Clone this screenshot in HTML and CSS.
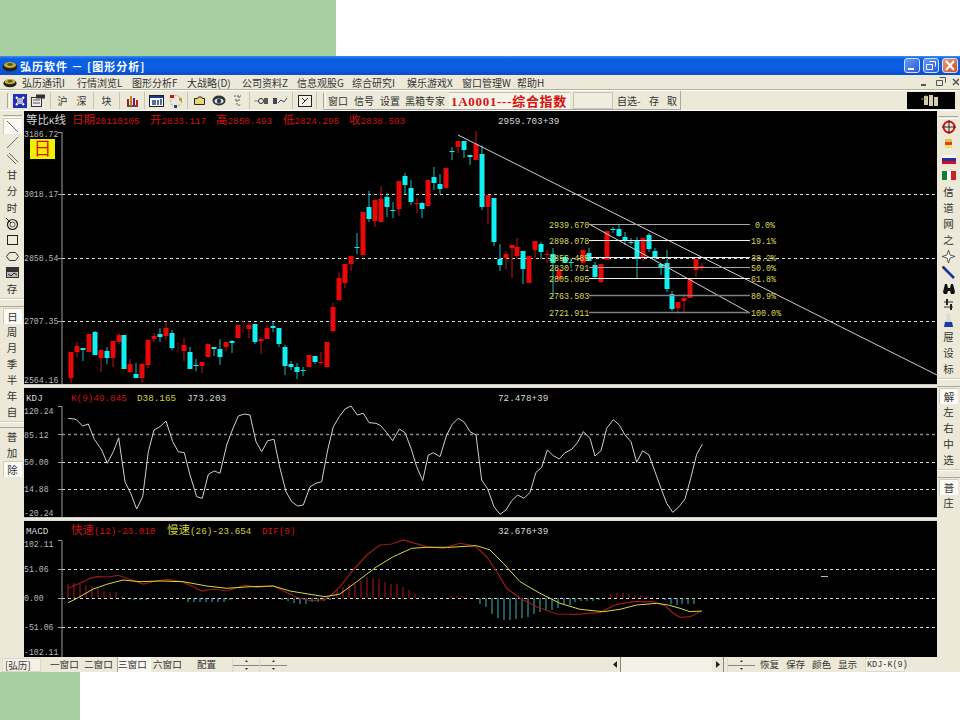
FILE: index.html
```html
<!DOCTYPE html>
<html lang="zh-CN">
<head>
<meta charset="utf-8">
<title>弘历软件</title>
<link rel="stylesheet" href="styles.css">
</head>
<body>
<div class="page">
  <div class="band-top"><div class="green-top"></div></div>
  <div class="app">
    <div class="titlebar">
      <svg class="ingot" width="16" height="12" viewBox="0 0 16 12"><ellipse cx="8" cy="7" rx="7.5" ry="4.5" fill="#222"/><ellipse cx="8" cy="5" rx="6" ry="3" fill="#c8b030"/><ellipse cx="8" cy="4.5" rx="3" ry="1.4" fill="#5a5a10"/></svg>
      <span class="title-text">弘历软件 － [图形分析]</span>
      <div class="win-btns">
        <span class="win-btn"><svg width="16" height="15" viewBox="0 0 16 15"><rect x="4" y="10" width="6" height="2" fill="#fff"/></svg></span>
        <span class="win-btn"><svg width="16" height="15" viewBox="0 0 16 15"><path d="M6.500 3.500h6v5M3.500 6.500h6v5h-6z" fill="none" stroke="#fff"/></svg></span>
        <span class="win-btn win-close"><svg width="16" height="15" viewBox="0 0 16 15"><path d="M4 3l8 9M12 3l-8 9" stroke="#fff" stroke-width="2"/></svg></span>
      </div>
    </div>
    <div class="menubar">
      <svg class="ingot-sm" width="14" height="11" viewBox="0 0 16 12"><ellipse cx="8" cy="7" rx="7.5" ry="4.5" fill="#222"/><ellipse cx="8" cy="5" rx="6" ry="3" fill="#c8b030"/><ellipse cx="8" cy="4.5" rx="3" ry="1.4" fill="#5a5a10"/></svg>
      <span class="menu-item">弘历通讯I</span>
      <span class="menu-item">行情浏览L</span>
      <span class="menu-item">图形分析F</span>
      <span class="menu-item">大战略(D)</span>
      <span class="menu-item">公司资料Z</span>
      <span class="menu-item">信息观股G</span>
      <span class="menu-item">综合研究I</span>
      <span class="menu-item">娱乐游戏X</span>
      <span class="menu-item">窗口管理W</span>
      <span class="menu-item">帮助H</span>
      <div class="mdi-btns">
        <svg width="40" height="12" viewBox="0 0 40 12"><rect x="2" y="8" width="5" height="2" fill="#555"/><path d="M20.500 1.500h6v5M17.500 4.500h6v5h-6z" fill="none" stroke="#555"/><path d="M34 3l6 6M40 3l-6 6" stroke="#555" stroke-width="1.500"/></svg>
      </div>
    </div>
    <div class="toolbar">
      <div class="tool-group tg-left">
        <span class="grip"></span>
        <span class="cell c19"><svg width="14" height="14" viewBox="0 0 14 14"><rect width="14" height="14" fill="#2030b0"/><path d="M3 3l8 8M11 3l-8 8" stroke="#fff" stroke-width="2"/><rect x="4" y="4" width="6" height="6" fill="#b0b0c8"/></svg></span>
        <span class="cell c19"><svg width="15" height="13" viewBox="0 0 15 13"><rect x=".5" y="3.500" width="10" height="9" fill="#eee" stroke="#333"/><rect x="5" y=".5" width="9" height="4" fill="#333"/><path d="M2 6h7M2 9h7" stroke="#555"/></svg></span>
        <span class="sep"></span>
        <span class="cell c19">沪</span><span class="cell c19">深</span>
        <span class="sep"></span>
        <span class="cell c21">块</span>
        <span class="sep sep-w"></span>
        <span class="cell c19"><svg width="13" height="13" viewBox="0 0 13 13"><path d="M1 12h11" stroke="#222" stroke-width="1.500"/><rect x="1" y="5" width="2" height="7" fill="#a02020"/><rect x="4" y="2" width="2" height="10" fill="#c08020"/><rect x="7" y="4" width="2" height="8" fill="#801080"/><rect x="10" y="6" width="2" height="6" fill="#c02020"/></svg></span>
        <span class="sep"></span>
        <span class="cell c19"><svg width="15" height="12" viewBox="0 0 15 12"><rect x=".5" y=".5" width="14" height="11" fill="#fff" stroke="#123"/><rect x="1" y="1" width="13" height="2" fill="#1a3a90"/><rect x="3" y="5" width="4" height="5" fill="#5070a0"/><path d="M9 5v5M12 4v6" stroke="#1a3a90" stroke-width="1.500"/></svg></span>
        <span class="cell c19"><svg width="14" height="14" viewBox="0 0 14 14"><circle cx="7" cy="7" r="5.500" fill="none" stroke="#999" stroke-dasharray="2 2"/><rect x="1" y="1" width="4" height="3" fill="#d01010"/><rect x="10" y="4" width="3" height="3" fill="#c0a020"/><rect x="5" y="11" width="3" height="3" fill="#204090"/></svg></span>
        <span class="sep"></span>
        <span class="cell c19"><svg width="11" height="9" viewBox="0 0 11 9"><path d="M.5 2.500h3l1-1.500h3l1 1.500h2v6H.5z" fill="#e6d870" stroke="#222"/></svg></span>
        <span class="cell c19"><svg width="14" height="11" viewBox="0 0 14 11"><ellipse cx="7" cy="5.500" rx="6.500" ry="5" fill="#333"/><ellipse cx="7" cy="6" rx="4.500" ry="2.500" fill="#e4e4e4"/><circle cx="7" cy="6" r="2.200" fill="#1a3a70"/></svg></span>
        <span class="cell c19"><svg width="9" height="13" viewBox="0 0 9 13"><path d="M1 2h7M6 2v3M2 6h5M4 6v4c0 2 3 2 3 0" fill="none" stroke="#555" stroke-dasharray="2 1"/></svg></span>
        <span class="sep"></span>
        <span class="cell c19"><svg width="16" height="8" viewBox="0 0 16 8"><path d="M0 4h4" stroke="#888"/><circle cx="7" cy="4" r="2.500" fill="none" stroke="#333"/><rect x="10" y="1" width="4" height="6" fill="#555"/></svg></span>
        <span class="cell c19"><svg width="15" height="8" viewBox="0 0 15 8"><rect x="0" y="1" width="4" height="6" fill="#445"/><path d="M5 6l3-3 3 2 3-4" fill="none" stroke="#445"/></svg></span>
        <span class="sep"></span>
        <span class="cell c19"><svg width="14" height="12" viewBox="0 0 14 12"><rect x=".5" y=".5" width="13" height="11" fill="#f4f2e8" stroke="#222"/><path d="M4 3l3 3-3 3M10 3L7 6" fill="none" stroke="#222"/></svg></span>
        <span class="sep"></span>
      </div>
      <div class="tool-group tg-right">
        <span class="grip"></span>
        <span class="cell t26">窗口</span><span class="cell t26">信号</span><span class="cell t25">设置</span><span class="cell t44">黑箱专家</span>
        <span class="stock-title">1A0001---综合指数</span>
        <span class="stock-input"></span>
        <span class="cell t32">自选-</span><span class="cell t18">存</span><span class="cell t14">取</span>
      </div>
      <div class="logo"><svg width="20" height="15" viewBox="0 0 20 15"><path d="M3 3h4v9H3zM8 2h4v11H8zM13 4h4v9h-4z" fill="#d8cfb0"/><path d="M0 6h5M5 2v2" stroke="#8a8470"/></svg></div>
    </div>
    <div class="main">
      <aside class="side">
        <span class="side-grip"></span>
        <div class="tools tools-left">
          <span class="tool tool-on"><svg width="13" height="13" viewBox="0 0 13 13"><path d="M1 1l11 11" stroke="#666"/></svg></span>
          <span class="tool"><svg width="13" height="13" viewBox="0 0 13 13"><path d="M12 1L1 12" stroke="#666"/></svg></span>
          <span class="tool"><svg width="13" height="13" viewBox="0 0 13 13"><path d="M1 3l9 9M3 1l9 9" stroke="#666"/></svg></span>
          <span class="tool">甘</span><span class="tool">分</span><span class="tool">时</span>
          <span class="tool"><svg width="12" height="12" viewBox="0 0 12 12"><circle cx="6.500" cy="6.500" r="5" fill="none" stroke="#222" stroke-width="1.200"/><circle cx="6.500" cy="6.500" r="2.500" fill="none" stroke="#555"/><path d="M0 0l5 5" stroke="#222"/></svg></span>
          <span class="tool"><svg width="11" height="10" viewBox="0 0 11 10"><rect x=".5" y=".5" width="10" height="9" fill="none" stroke="#222"/></svg></span>
          <span class="tool"><svg width="13" height="9" viewBox="0 0 13 9"><path d="M3.500.5h6l3 4-3 4h-6l-3-4z" fill="none" stroke="#333"/></svg></span>
          <span class="tool"><svg width="13" height="11" viewBox="0 0 13 11"><rect width="13" height="11" fill="#333"/><rect x="1" y="5" width="11" height="5" fill="#bbb"/><path d="M2 7l3 2 3-3 3 2" fill="none" stroke="#222"/></svg></span>
          <span class="tool">存</span>
        </div>
        <span class="side-sep"></span>
        <span class="tool tool-on">日</span><span class="tool">周</span><span class="tool">月</span><span class="tool">季</span><span class="tool">半</span><span class="tool">年</span><span class="tool">自</span>
        <span class="side-sep sep-short"></span>
        <span class="tool">普</span><span class="tool">加</span><span class="tool tool-on">除</span>
      </aside>
      <div class="charts">
        <svg class="chart chart-top" viewBox="24 111 913 273" width="913" height="273">
          <g class="grid"><path d="M62 194.500H937M62 258.500H937M62 321.500H937"/></g>
          <path class="axis" d="M58 132.500h4V384M58 194.500h4M58 258.500h4M58 321.500h4"/>
          <path class="wick-red" d="M71 352V383M77 342V357M101 350V372M113 341V367M119 333V344M130 359V373M142 363V383M148 340V368M154 333V342M166 322V340M184 338V361M202 362V373M226 342V351M249 323V338M261 337V354M267 325V339M321 352V365M333 303V332M339 272V300M345 264V288M351 256V271M363 212V257M375 200V227M381 186V222M399 181V216M417 198V213M458 141V153M476 131V160M488 195V224M506 251V269M512 245V278M517 238V259M535 241V258M547 250V263M601 264V283M643 238V261M678 302V314M684 294V313M696 259V277M702 263V271"/>
          <path class="wick-dim" d="M178 342V353M243 321V333"/>
          <path class="wick-cyan" d="M83 348V361M95 331V355M107 347V364M136 363V378M160 328V342M172 330V350M190 347V369M196 359V371M214 347V356M220 339V365M232 340V353M255 324V344M273 322V332M279 328V347M285 345V375M291 361V370M297 363V379M303 367V376M315 356V364M357 233V254M369 191V222M387 193V217M393 202V218M405 173V194M411 180V205M422 202V218M434 167V190M440 174V194M452 147V160M464 141V158M470 155V165M482 145V210M494 198V246M500 244V271M523 251V284M541 242V259M553 248V297M565 255V263M571 258V268M589 248V261M595 262V279M613 227V233M619 224V237M625 232V245M631 238V245M637 237V279M649 233V252M655 248V260M661 264V275M667 250V292M672 291V311"/>
          <path class="body-red" d="M71 352V378M77 346V352M89 334V352M101 350V358M113 341V358M119 335V342M130 364V372M142 364V378M148 340V365M154 336V339M166 328V336M184 345V351M202 362V366M208 344V357M226 342V347M238 325V338M249 325V329M261 339V341M267 328V339M309 355V367M321 362V363M327 342V367M333 307V331M339 278V300M345 264V283M351 256V264M363 212V255M375 200V221M381 199V222M399 181V209M417 203V204M428 180V206M446 168V188M458 141V147M476 144V160M488 195V207M506 254V258M512 245V248M517 247V256M529 256V283M535 241V250M547 254V255M559 270V279M583 250V263M601 264V282M607 231V260M643 238V257M678 302V308M684 298V301M690 279V298M696 259V270M702 266V268"/>
          <path class="body-cyan" d="M83 348V350M95 332V355M107 351V358M124 335V369M136 374V378M160 334V337M172 333V348M190 352V369M196 365V366M214 347V349M220 349V357M232 341V343M255 324V342M273 326V328M279 328V344M285 347V366M291 364V367M297 367V372M303 370V371M315 356V362M357 247V248M369 207V219M387 197V207M393 210V211M405 176V185M411 188V202M422 203V209M434 177V183M440 184V189M452 151V152M464 141V150M470 155V157M482 154V207M494 198V242M500 259V265M523 251V269M541 244V252M553 254V263M565 257V263M571 262V263M589 253V261M595 265V277M613 229V230M619 229V236M625 237V241M631 242V243M637 240V259M649 235V249M655 251V258M661 264V267M667 263V289M672 294V309"/>
          <path class="trend" d="M458 135L937 375M589 224L750 313"/>
          <path class="fib-strong" d="M589 240.500H750M589 257.500H750M589 278.500H750"/>
          <path class="fib-weak" d="M589 224.500H750M589 267.500H750"/>
          <path class="fib-gray" d="M589 295.500H750M589 312.500H750"/>
          <g class="tx-fib">
            <text x="549" y="228">2939.670</text><text x="549" y="244">2898.078</text><text x="549" y="261">2856.485</text><text x="549" y="271">2830.791</text><text x="549" y="282">2805.095</text><text x="549" y="299">2763.503</text><text x="549" y="316">2721.911</text>
            <text x="755" y="228">0.0%</text><text x="751" y="244">19.1%</text><text x="751" y="261">38.2%</text><text x="751" y="271">50.0%</text><text x="751" y="282">61.8%</text><text x="751" y="299">80.9%</text><text x="751" y="316">100.0%</text>
          </g>
          <g class="tx-axis"><text x="24" y="137">3186.72</text><text x="24" y="197">3018.17</text><text x="24" y="261">2858.54</text><text x="24" y="324">2707.35</text><text x="24" y="383">2564.16</text></g>
          <text class="tx-white tx-head" x="26" y="124"><tspan class="cjk">等比</tspan>K<tspan class="cjk">线</tspan></text>
          <g class="tx-red tx-head"><text x="72" y="124"><tspan class="cjk">日期</tspan>20110105</text><text x="150" y="124"><tspan class="cjk">开</tspan>2833.117</text><text x="216" y="124"><tspan class="cjk">高</tspan>2850.493</text><text x="283" y="124"><tspan class="cjk">低</tspan>2824.296</text><text x="349" y="124"><tspan class="cjk">收</tspan>2838.593</text></g>
          <text class="tx-white tx-head" x="498" y="124">2959.703+39</text>
          <rect class="badge" x="30" y="139" width="25" height="20"/>
          <text class="badge-tx" x="42.500" y="155">日</text>
        </svg>
        <div class="split"></div>
        <svg class="chart chart-kdj" viewBox="24 388 913 129" width="913" height="129">
          <g class="grid"><path class="grid-dim" d="M62 434.500H937"/><path d="M62 462.500H937M62 489.500H937"/></g>
          <path class="axis" d="M58 406.500h4V517M58 434.500h4M58 462.500h4M58 489.500h4"/>
          <polyline class="kdj" points="68.300,418.300 76,419.300 82.700,426 88.300,424 94.300,439.300 101.700,450 107.300,463.300 113.300,451.700 118.700,437.700 125,481.700 130.700,493.300 136.700,509 142.700,496.700 148.300,451.700 154,430 160,426.700 166,421 172.700,441.700 178.300,451.700 184.300,452.700 190,475 196.700,496.700 202.300,498.300 208.300,474.300 214.300,471 220,473.300 226.700,445 232.300,430 238.300,416 244.300,414 250,415 256,441.700 261.700,451.700 267.700,440.700 274,439.300 280,468.300 286,491.700 291.700,501.700 297.700,506 303.300,505 310,486.700 316,483.300 321.700,481.700 327.700,450 333.300,426.700 339.300,416.700 345,409 351,406 357.300,415 363.300,413.300 369,422.700 376,423.300 380.700,425.700 386.700,432.700 392.700,440.700 399.300,429 405,432.700 411,448.300 416.700,466.700 422.700,480.700 428.300,455 433.300,452.700 440,456.700 446.700,435 452.300,424.300 458.300,418.300 464.300,422.300 470,431.700 476,435 481.700,480 487.700,489 494,506.700 500,514.300 506,510 511.700,500.700 517.700,495 524,498.300 530,492.300 536,472.300 541.700,467.300 547.300,450 553.300,455.700 559.300,459 565,452.700 571.700,449.300 577.700,442.300 583.300,431.700 590,438.300 595,456 601,450.700 606.700,428.300 613.300,419.700 619.300,425 625,435 631,441.700 636.700,462.300 642.700,450.700 649,455 655,471.700 661,488.300 666.700,503.300 672.700,512.300 679,506.700 685,499 690.700,478.300 696.700,454.300 702.300,444.300"/>
          <g class="tx-axis"><text x="24" y="414">120.24</text><text x="24" y="438">85.12</text><text x="24" y="465">50.00</text><text x="24" y="492">14.88</text><text x="24" y="516">-20.24</text></g>
          <text class="tx-white tx-head" x="26" y="401">KDJ</text>
          <text class="tx-red tx-head" x="71" y="401">K(9)49.845</text>
          <text class="tx-yellow tx-head" x="137" y="401">D38.165</text>
          <text class="tx-white tx-head" x="187" y="401">J73.203</text>
          <text class="tx-white tx-head" x="498" y="401">72.478+39</text>
        </svg>
        <div class="split"></div>
        <svg class="chart chart-macd" viewBox="24 521 913 136" width="913" height="136">
          <g class="grid"><path d="M62 569.500H937M62 598.500H937M62 627.500H937"/></g>
          <path class="axis" d="M58 540.500h4V657M58 569.500h4M58 598.500h4M58 627.500h4"/>
          <path class="hist-red" d="M68 598V584M74 598V583M80 598V584M86 598V585M92 598V587M98 598V588M104 598V591M110 598V592M116 598V592M122 598V596M242 598V597M248 598V597M254 598V597M337 598V590M343 598V587M349 598V584M355 598V584M361 598V581M367 598V578M373 598V578M379 598V579M385 598V582M391 598V584M397 598V584M403 598V587M409 598V590M415 598V594M421 598V597M427 598V597M451 598V596M457 598V596M463 598V596M611 598V594M617 598V593M623 598V593M629 598V594M635 598V595M641 598V595M647 598V596M653 598V597"/>
          <path class="hist-teal" d="M134 598V600M140 598V600M146 598V600M188 598V602M194 598V602M200 598V602M206 598V602M212 598V602M218 598V602M224 598V602M230 598V600M282 598V600M288 598V601M294 598V603M300 598V604M306 598V604M312 598V602M318 598V602M324 598V601M330 598V600M480 598V604M486 598V607M492 598V614M498 598V618M504 598V620M510 598V620M516 598V619M522 598V618M528 598V617M534 598V614M540 598V612M546 598V610M552 598V610M558 598V608M564 598V605M570 598V605M575 598V602M581 598V601M587 598V601M593 598V601M599 598V600M665 598V600M671 598V604M677 598V605M682 598V604M688 598V604M694 598V604"/>
          <polyline class="macd-red" points="68.300,588.300 80,583.300 90,578.300 96.700,576.700 108,577 118.300,575.300 126.700,578.300 143.300,584 155,581 166.700,579.300 181.700,581.700 193.300,586.700 201.700,591 213.300,589 226.700,591 245,585 256.700,587.300 273.300,586 285,591.700 296.700,597.300 311.700,601 325,599.300 333.300,593.300 340,586.700 353.300,570 366.700,555 380,545 391.700,544 403.300,540 415,543.300 426.700,546.700 443.300,548.300 460,543.300 475,545.700 486.700,556.700 496.700,571.700 506.700,588.300 520,598.300 536.700,606.700 556.700,614 576.700,614.300 600,612.300 616.700,604.300 633.300,601.700 653.300,601.700 665,605.700 673.300,613.300 680,617.300 690,616.700 701.700,611"/>
          <polyline class="macd-yellow" points="68.300,602.700 80,596.700 93.300,589 106.700,584.300 123.300,580 140,581.700 160,581 183.300,581.700 206.700,586 226.700,588.300 250,586.700 273.300,586 290,591 310,594.300 325,596.700 340,594 356.700,581.700 376.700,566.700 393.300,556.700 411.700,548.300 426.700,547.300 450,547.300 476.700,545.700 490,550 503.300,563.300 520,581.700 540,593.300 560,603.300 580,609.300 603.300,611.700 620,609.300 636.700,605 656.700,603.300 668.300,605 680,608.300 690,611.700 701.700,611"/>
          <path class="tick" d="M821 576.500h7"/>
          <g class="tx-axis"><text x="24" y="547">102.11</text><text x="24" y="572">51.06</text><text x="24" y="601">0.00</text><text x="24" y="630">-51.06</text><text x="24" y="655">-102.11</text></g>
          <text class="tx-white tx-head" x="26" y="534">MACD</text>
          <text class="tx-red tx-head" x="71" y="534"><tspan class="cjk">快速</tspan>(12)-23.010</text>
          <text class="tx-yellow tx-head" x="167" y="534"><tspan class="cjk">慢速</tspan>(26)-23.654</text>
          <text class="tx-red tx-head" x="262" y="534">DIF(9)</text>
          <text class="tx-white tx-head" x="498" y="534">32.676+39</text>
        </svg>
      </div>
      <aside class="side side-right">
        <span class="side-grip"></span>
        <div class="tools tools-right">
          <span class="tool"><svg width="14" height="14" viewBox="0 0 14 14"><circle cx="7" cy="7" r="5.500" fill="none" stroke="#d01010" stroke-width="2"/><path d="M7 0v14M0 7h14" stroke="#222"/></svg></span>
          <span class="tool"><svg width="7" height="9" viewBox="0 0 7 9"><rect width="7" height="3" fill="#e8c050"/><rect y="3" width="7" height="3" fill="#e04020"/><rect y="6" width="7" height="3" fill="#f0e070"/></svg></span>
          <span class="tool"><svg width="14" height="9" viewBox="0 0 14 9"><rect width="14" height="3" fill="#f4f4f4"/><rect y="3" width="14" height="3" fill="#2030a0"/><rect y="6" width="14" height="3" fill="#d01020"/></svg></span>
          <span class="tool"><svg width="14" height="9" viewBox="0 0 14 9"><rect width="5" height="9" fill="#108030"/><rect x="5" width="4" height="9" fill="#fff"/><rect x="9" width="5" height="9" fill="#d02020"/></svg></span>
          <span class="tool">信</span><span class="tool">道</span><span class="tool">网</span><span class="tool">之</span>
          <span class="tool"><svg width="13" height="13" viewBox="0 0 13 13"><path d="M6.500 0l1.500 5 5 1.500-5 1.500-1.500 5-1.500-5-5-1.500 5-1.500z" fill="#fff" stroke="#333" stroke-width=".8"/></svg></span>
          <span class="tool"><svg width="13" height="13" viewBox="0 0 13 13"><path d="M1 1l11 11" stroke="#1830a0" stroke-width="2.500"/><path d="M0 0l3 1-2 2z" fill="#222"/></svg></span>
          <span class="tool"><svg width="14" height="11" viewBox="0 0 14 11"><path d="M3 1h2l1 4h2l1-4h2l2 8-1 2h-3L8 8H6l-1 3H2L1 9z" fill="#111"/></svg></span>
          <span class="tool"><svg width="12" height="11" viewBox="0 0 12 11"><path d="M1 3h9M1 8h9" stroke="#333"/><path d="M4 0v6M8 5v6" stroke="#222" stroke-width="2"/></svg></span>
          <span class="tool"><svg width="9" height="13" viewBox="0 0 9 13"><path d="M3 0h3v4l3 6v3H0v-3l3-6z" fill="#d8d8d8"/><path d="M1 8h7l1 5H0z" fill="#1a3aa0"/></svg></span>
          <span class="tool">屉</span><span class="tool">设</span><span class="tool">标</span>
        </div>
        <span class="side-sep"></span>
        <span class="tool tool-on">解</span><span class="tool">左</span><span class="tool">右</span><span class="tool">中</span><span class="tool">选</span>
        <span class="side-sep"></span>
        <span class="tool tool-on">普</span><span class="tool">庄</span>
      </aside>
    </div>
    <div class="statusbar">
      <span class="st-box st-first">[弘历]</span>
      <span class="st-tab">一窗口</span><span class="st-tab">二窗口</span><span class="st-tab st-tab-on">三窗口</span><span class="st-tab">六窗口</span>
      <span class="st-conf">配置</span>
      <span class="spin"><svg width="27" height="14" viewBox="0 0 27 14"><path d="M0 7.500H27" stroke="#888"/><path d="M12 4h3l-1.500-2zM12 10h3l-1.500 2z" fill="#333"/></svg></span>
      <span class="spin"><svg width="27" height="14" viewBox="0 0 27 14"><path d="M0 7.500H27" stroke="#888"/><path d="M12 4h3l-1.500-2zM12 10h3l-1.500 2z" fill="#333"/></svg></span>
      <span class="st-gap"></span>
      <span class="scroll-btn"><svg width="6" height="7" viewBox="0 0 6 7"><path d="M5 0v7L1 3.500z" fill="#222"/></svg></span>
      <span class="scroll-track"></span>
      <span class="scroll-btn"><svg width="6" height="7" viewBox="0 0 6 7"><path d="M1 0v7l4-3.500z" fill="#222"/></svg></span>
      <span class="spin spin-r"><svg width="27" height="14" viewBox="0 0 27 14"><path d="M0 7.500H27" stroke="#888"/><path d="M12 4h3l-1.500-2zM12 10h3l-1.500 2z" fill="#333"/></svg></span>
      <span class="st-cmd st-cmd-first">恢复</span><span class="st-cmd">保存</span><span class="st-cmd">颜色</span><span class="st-cmd st-cmd-last">显示</span>
      <span class="st-box st-kdj">KDJ-K(9)</span>
    </div>
  </div>
  <div class="green-bottom"></div>
</div>
</body>
</html>
```

FILE: styles.css
```css
* { box-sizing: border-box; }
html, body { margin: 0; padding: 0; background: #fff; }
body { font-family: "Noto Sans CJK SC", "Liberation Sans", sans-serif; }
.page { width: 960px; height: 720px; display: flex; flex-direction: column; overflow: hidden; }
.band-top { height: 56px; flex: none; }
.green-top { width: 336px; height: 56px; background: #a5cf9f; }
.green-bottom { width: 80px; height: 48px; background: #a5cf9f; flex: none; }

.app { height: 616px; flex: none; display: flex; flex-direction: column; background: #ece9d8; }

.titlebar { height: 19px; flex: none; display: flex; align-items: center; padding: 0 2px 0 1px; color: #fff;
  background: linear-gradient(#3f8cf3 0, #0a5fe0 3px, #0b5fe2 12px, #0a4fd0 17px, #1050c8 19px); }
.ingot { margin: 0 2px 0 1px; }
.title-text { font-size: 11px; font-weight: 700; letter-spacing: 1px; line-height: 18px; }
.win-btns { margin-left: auto; display: flex; gap: 3px; }
.win-btn { width: 16px; height: 15px; border: 1px solid #d0e0fa; border-radius: 3px; background: linear-gradient(135deg, #6a9cf4, #2458d8); display: flex; align-items: center; justify-content: center; }
.win-btn svg { flex: none; }
.win-close { background: linear-gradient(135deg, #ee9a78, #d44a22); }

.menubar { height: 15px; flex: none; display: flex; align-items: center; padding-left: 3px; font-size: 10px; line-height: 15px; color: #333; border-bottom: 1px solid #b5b2a2; }
.ingot-sm { margin-right: 5px; }
.menu-item { width: 55px; flex: none; white-space: nowrap; }
.mdi-btns { margin-left: auto; margin-right: 1px; display: flex; }

.toolbar { height: 21px; flex: none; display: flex; align-items: stretch; border-top: 1px solid #fff; border-bottom: 1px solid #fff; font-size: 10px; color: #333; }
.tool-group { display: flex; align-items: center; height: 19px; }
.tg-left { width: 323px; padding-left: 7px; }
.tg-right { width: 358px; border-right: 1px solid #aca899; border-bottom: 1px solid #aca899; }
.grip { width: 3px; height: 15px; border-left: 1px solid #aca899; border-right: 1px solid #fff; flex: none; margin-right: 0; }
.tg-right .grip { margin-right: 2px; }
.cell { display: flex; align-items: center; justify-content: center; flex: none; height: 19px; white-space: nowrap; line-height: 19px; }
.c19 { width: 19px; }
.c21 { width: 21px; }
.t26, .t25, .t44, .t32, .t18, .t14 { justify-content: flex-start; }
.t26 { width: 26px; } .t25 { width: 25px; } .t44 { width: 44px; } .t32 { width: 32px; } .t18 { width: 18px; } .t14 { width: 14px; }
.sep { width: 5px; height: 17px; flex: none; background: linear-gradient(90deg, transparent 2px, #c8c5b4 2px, #c8c5b4 3px, transparent 3px); }
.sep-w { width: 6px; }
.stock-title { width: 121px; height: 17px; flex: none; color: #d81010; font-size: 13px; font-weight: 700; letter-spacing: .7px; line-height: 17px; padding-left: 2px; white-space: nowrap; overflow: hidden; background: #f6f4e8; border-top: 1px solid #c8c5b4; font-family: "Liberation Serif", "Noto Sans CJK SC", serif; }
.stock-input { width: 40px; height: 17px; margin: 0 4px 0 3px; flex: none; border: 1px solid #c8c5b4; background: #efece0; }
.logo { width: 48px; height: 17px; margin: 1px 5px 0 auto; background: #000; display: flex; justify-content: center; align-items: center; }

.main { flex: 1; min-height: 0; display: flex; }
.side { width: 24px; flex: none; display: flex; flex-direction: column; align-items: center; padding-top: 4px; font-size: 10.500px; color: #333; }
.side-right { width: 23px; padding-top: 5px; }
.side-grip { width: 19px; height: 3px; flex: none; border-top: 1px solid #aca899; border-bottom: 1px solid #fff; }
.tools { display: flex; flex-direction: column; align-items: center; flex: none; }
.tool { width: 19px; height: 16px; flex: none; display: flex; align-items: center; justify-content: center; line-height: 16px; }
.tools-left .tool { height: 16.300px; }
.tools-right .tool { height: 16.130px; }
.tool-on { background: #fbfaf4; border-left: 1px solid #cfcbb9; border-top: 1px solid #cfcbb9; }
.side-sep { width: 24px; height: 9px; flex: none; margin: 1px 0; border-top: 1px solid #cfcbb9; border-bottom: 1px solid #aca899; background: linear-gradient(#fff 1px, transparent 1px); }
.sep-short { height: 7px; }

.charts { width: 913px; flex: none; display: flex; flex-direction: column; }
.chart { display: block; flex: none; background: #000; }
.split { height: 4px; flex: none; background: linear-gradient(#b9b7ab, #f2f0e6 40%, #d8d6ca); }

.grid path { fill: none; stroke: #d8d8d8; stroke-dasharray: 3 3; stroke-width: 1; }
.grid .grid-dim { stroke: #8c8c8c; stroke-width: 1.5; }
.axis { fill: none; stroke: #9a9a9a; stroke-width: 1; }
.wick-red { fill: none; stroke: #c81010; stroke-width: 1; }
.wick-dim { fill: none; stroke: #701010; stroke-width: 1; }
.wick-cyan { fill: none; stroke: #1bbcbc; stroke-width: 1; }
.body-red { fill: none; stroke: #e80808; stroke-width: 5; }
.body-cyan { fill: none; stroke: #10f0f0; stroke-width: 5; }
.trend { fill: none; stroke: #cfcfcf; stroke-width: 1; }
.fib-strong { fill: none; stroke: #f0f0f0; stroke-width: 1; }
.fib-weak { fill: none; stroke: #a8a8a8; stroke-width: 1; }
.fib-gray { fill: none; stroke: #808080; stroke-width: 1.5; }
.kdj { fill: none; stroke: #d0d0d0; stroke-width: 1; }
.hist-red { fill: none; stroke: #b01818; stroke-width: 1; }
.hist-teal { fill: none; stroke: #36b8b8; stroke-width: 1; }
.macd-red { fill: none; stroke: #9c1a1a; stroke-width: 1.2; }
.macd-yellow { fill: none; stroke: #d8d840; stroke-width: 1; }
.tick { fill: none; stroke: #bbb; stroke-width: 1; }

.chart text { font-family: "Liberation Mono", "Noto Sans CJK SC", monospace; }
.tx-fib text { font-size: 8.400px; fill: #dada4e; }
.tx-axis text { font-size: 8.200px; fill: #b8b8b8; }
.tx-head { font-size: 9.300px; }
.cjk { font-size: 11.500px; }
.tx-white { fill: #d8d8d8; }
.tx-red { fill: #d01010; }
.tx-yellow { fill: #d0d040; }
.badge { fill: #f0f000; }
.badge-tx { font-size: 18px; fill: #e01010; text-anchor: middle; }

.statusbar { height: 15px; flex: none; display: flex; align-items: center; font-size: 9.600px; line-height: 15px; color: #333; }
.st-box { height: 14px; flex: none; border: 1px solid #dcd9c8; background: #f4f2e6; white-space: nowrap; line-height: 12px; }
.st-first { width: 39px; margin-left: 2px; padding-left: 2px; }
.st-tab { width: 34px; flex: none; white-space: nowrap; padding-left: 1px; }
.st-tab:nth-of-type(2) { margin-left: 8px; }
.st-tab-on { background: #f9f8f0; border-left: 1px solid #aca899; padding-left: 0; margin-right: 1px; }
.st-conf { width: 35px; flex: none; margin-left: 11px; }
.spin { width: 27px; height: 14px; flex: none; display: block; border-left: 1px solid #dcd9c8; }
.spin svg { display: block; }
.st-gap { width: 323px; flex: none; }
.scroll-btn { width: 12px; height: 15px; flex: none; display: flex; align-items: center; justify-content: center; border-right: 1px solid #8a8878; }
.scroll-track { width: 91px; height: 15px; flex: none; background: #f3f1e6; }
.spin-r { margin-left: 3px; }
.st-cmd { width: 26px; flex: none; white-space: nowrap; }
.st-cmd-first { margin-left: 6px; }
.st-cmd-last { width: 27px; }
.st-kdj { width: 40px; font-family: "Liberation Mono", monospace; font-size: 8.500px; padding-left: 1px; }
```
